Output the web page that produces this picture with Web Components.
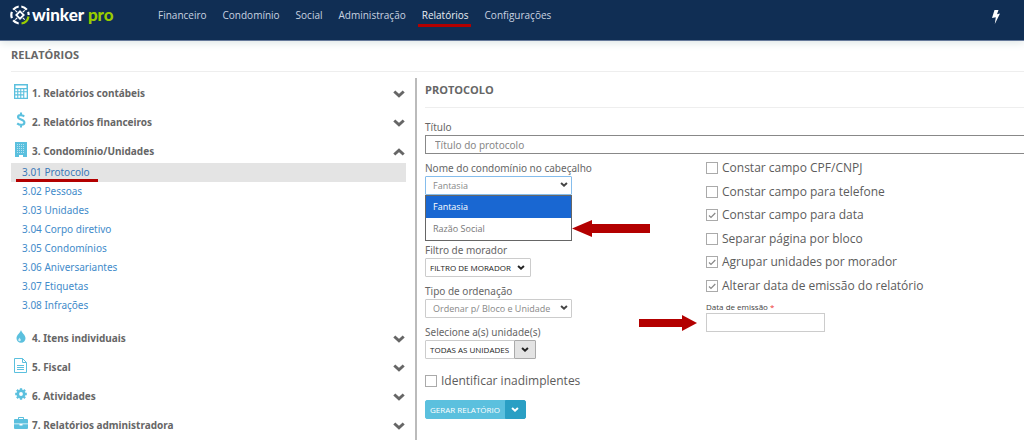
<!DOCTYPE html>
<html lang="pt-BR">
<head>
<meta charset="utf-8">
<meta name="viewport" content="width=device-width, initial-scale=1">
<title>Winker Pro – Relatórios</title>
<style>
  body { margin: 0; background: #fff; color: #666; font: 10px/16px "Noto Sans", "Open Sans", sans-serif; }
</style>
</head>
<body>
<winker-app></winker-app>

<script>
const define = (name, html, setup) => {
  const template = document.createElement('template');
  template.innerHTML = html;
  customElements.define(name, class extends HTMLElement {
    connectedCallback() {
      if (this.shadowRoot) return;
      const root = this.attachShadow({ mode: 'open' });
      root.append(template.content.cloneNode(true));
      if (setup) setup(this, root);
    }
  });
};

const icons = {
  calc: '<svg viewBox="0 0 14 15" width="14" height="15"><path fill="currentColor" fill-rule="evenodd" d="M0 0h14v15H0zM1.500 1.500v2.500h11V1.500zM1.300 5.300v1.900H3.200V5.300zm3 0v1.900h1.900V5.300zm3 0v1.900h1.900V5.300zm3 0v1.900h2.400V5.300zM1.300 8.300v1.900h1.900V8.300zm3 0v1.900h1.900V8.300zm3 0v1.900h1.900V8.300zm3 0v5.400h2.400V8.300zM1.300 11.500v2.200h1.900v-2.200zm3 0v2.200h1.900v-2.200zm3 0v2.200h1.900v-2.200z"/></svg>',
  dollar: '<svg viewBox="0 0 10 16" width="10" height="16"><path fill="none" stroke="currentColor" stroke-width="2.100" d="M8.200 4.400C6.500 2.700 2 2.500 2 5c0 3 6.400 2.200 6.400 5.500 0 3-5 2.900-7.200.9M5 .5v3M5 12v3.500"/></svg>',
  building: '<svg viewBox="0 0 12 15" width="12" height="15"><path fill="currentColor" d="M0 0h12v15H8v-2H4v2H0z"/><path stroke="#b5e1f1" stroke-width="1" stroke-dasharray="1 1" d="M2 2.500h8M2 4.500h8M2 6.500h8M2 8.500h8M2 10.500h8"/></svg>',
  drop: '<svg viewBox="0 0 10 13" width="10" height="13"><path fill="currentColor" d="M5 0c.6 2.800 4.500 4.800 4.500 8.300a4.500 4.500 0 0 1-9 0C.5 4.800 4.400 2.800 5 0z"/><path fill="#d6eff8" d="M3.500 7.400c.2 1 1.300 1.500 1.300 2.500a1.200 1.200 0 0 1-2.500 0c0-1 1-1.500 1.200-2.500z"/></svg>',
  file: '<svg viewBox="0 0 13 15" width="13" height="15"><path fill="none" stroke="currentColor" d="M.5.5h8l4 4v10H.5zM8.500.5v4h4M3 7.500h7M3 9.500h7M3 11.500h7"/></svg>',
  gear: '<svg viewBox="0 0 12 12" width="12" height="12"><circle cx="6" cy="6" r="3.200" fill="none" stroke="currentColor" stroke-width="2.600"/><path stroke="currentColor" stroke-width="2.300" d="M6 .2v1.900M6 9.900v1.900M.2 6h1.900M9.900 6h1.900M1.900 1.900l1.300 1.300M8.800 8.800l1.300 1.300M1.900 10.100l1.300-1.300M8.800 3.200l1.300-1.300"/></svg>',
  case: '<svg viewBox="0 0 14 12" width="14" height="12"><path fill="currentColor" fill-rule="evenodd" d="M4 2V.8Q4 0 4.800 0h4.400Q10 0 10 .8V2h3q1 0 1 1v3.500H0V3q0-1 1-1zm1 0h4V1H5zM0 7.300h5.500v1.200h3V7.300H14V11q0 1-1 1H1q-1 0-1-1z"/></svg>',
  down: '<svg viewBox="0 0 12 8" width="12" height="8"><path fill="none" stroke="currentColor" stroke-width="3" d="M1.300 1.500 6 5.800l4.700-4.300"/></svg>',
  up: '<svg viewBox="0 0 12 8" width="12" height="8"><path fill="none" stroke="currentColor" stroke-width="3" d="M1.300 6.500 6 2.200l4.700 4.300"/></svg>',
  caret: '<svg viewBox="0 0 12 8" width="8" height="5"><path fill="none" stroke="currentColor" stroke-width="3.200" d="M1.300 1.500 6 5.800l4.700-4.300"/></svg>',
  bolt: '<svg viewBox="0 0 8 14" width="8" height="14"><path fill="currentColor" d="M2.500 0h4L5 4.200l3-.7L2.800 14l1-6.800L0 8z"/></svg>',
  left: '<svg viewBox="0 0 78 17" width="78" height="17"><path fill="#b30000" d="M0 8.500 20 0v4h58v9H20v4z"/></svg>',
  right: '<svg viewBox="0 0 58 16" width="58" height="16"><path fill="#b30000" d="M58 8 43 0v4H0v8h43v4z"/></svg>',
  logo: '<svg viewBox="0 0 20 20" width="20" height="20"><g fill="none" stroke="#fff" stroke-width="2.200"><path d="M8.700 1.500A8.600 8.600 0 0 0 3.200 4.700M1.900 6.900a8.600 8.600 0 0 0 0 6.200M3.200 15.300a8.600 8.600 0 0 0 5.500 3.200M11.300 1.500A8.600 8.600 0 0 1 16.800 4.700M18.100 6.900q.6 1.500.5 3.100"/><path stroke="#9c0" d="M18.500 11.500a8.600 8.600 0 0 1-7 7"/><path stroke-width="1.800" d="M10 6.300 13.700 10 10 13.700 6.300 10z"/><path stroke-width="1.100" d="m5.300 5.300 1.900 1.900M14.700 5.300l-1.900 1.900M5.300 14.700l1.900-1.900M14.700 14.700l-1.900-1.900"/></g></svg>'
};

define('ui-icon', `<style>:host{display:inline-flex;flex:none}svg{display:block}</style>`,
  (host, root) => root.append(document.createRange().createContextualFragment(icons[host.getAttribute('name')])));

define('app-header', `
<style>
  :host { display: block; background: #102e54; border-bottom: 1px solid #66799a; height: 40px; position: relative; box-shadow: 0 2px 8px #dfe6e6; }
  .bar { display: flex; align-items: center; height: 30px; padding: 0 24px 0 10px; }
  .brand { display: flex; align-items: center; gap: 2px; width: 148px; color: #fff; text-decoration: none; font: 900 17px/24px Lato, sans-serif; }
  .brand b { color: #9c0; font-weight: 900; }
  nav { display: flex; gap: 16px; flex: 1; font-family: "Open Sans", sans-serif; }
  nav a { color: #c9d3e0; text-decoration: none; position: relative; }
  nav a[aria-current] { color: #e8edf3; }
  nav a[aria-current]::after { content: ""; position: absolute; left: -4px; right: -2px; top: 17px; height: 3px; background: #b30000; }
  button { border: 0; padding: 0; background: none; color: #fff; display: flex; margin-top: 4px; }
</style>
<div class="bar">
  <a class="brand" href="#inicio"><ui-icon name="logo"></ui-icon><span>winker <b>pro</b></span></a>
  <nav>
    <a href="#financeiro">Financeiro</a><a href="#condominio">Condomínio</a><a href="#social">Social</a>
    <a href="#administracao">Administração</a><a href="#relatorios" aria-current="page">Relatórios</a><a href="#configuracoes">Configurações</a>
  </nav>
  <button type="button" aria-label="Ações rápidas"><ui-icon name="bolt"></ui-icon></button>
</div>`);

define('section-title', `
<style>
  :host { display: block; border-bottom: 1px solid #eee; }
  h2 { margin: 0; color: #666; font: 700 11px/16px "Open Sans", sans-serif; }
</style>
<h2><slot></slot></h2>`);

define('report-group', `
<style>
  :host { display: block; margin-bottom: 5px; }
  button { display: flex; align-items: center; width: 100%; height: 24px; padding: 0 1px 0 0; border: 0; background: none; color: #666; font: 700 10px/16px "Noto Sans", sans-serif; text-align: left; }
  .icon { display: flex; justify-content: center; width: 19px; margin: 0 2px 4px 0; color: #5bc0de; }
  .name { flex: 1; }
  .chev { color: #666; margin-top: 2px; }
</style>
<button type="button"><span class="icon"></span><span class="name"></span></button>
<slot></slot>`,
  (host, root) => {
    const open = host.hasAttribute('open');
    root.querySelector('button').setAttribute('aria-expanded', open);
    root.querySelector('.name').textContent = host.getAttribute('label');
    root.querySelector('.icon').innerHTML = `<ui-icon name="${host.getAttribute('icon')}"></ui-icon>`;
    root.querySelector('button').insertAdjacentHTML('beforeend', `<ui-icon class="chev" name="${open ? 'up' : 'down'}"></ui-icon>`);
  });

define('report-link', `
<style>
  :host { display: block; padding: 0 11px; line-height: 19px; }
  :host(:last-of-type) { margin-bottom: 11px; }
  :host([current]) { background: #e4e4e4; }
  a { display: inline-block; color: #428bca; text-decoration: none; position: relative; }
  :host([current]) a { color: #3a78b8; }
  :host([current]) a::after { content: ""; position: absolute; left: -6px; right: -8px; bottom: 0; height: 3px; background: #b30000; }
</style>
<a href="#relatorio"><slot></slot></a>`);

define('report-menu', `
<style>:host { display: block; padding-top: 3px; }</style>
<report-group icon="calc" label="1. Relatórios contábeis"></report-group>
<report-group icon="dollar" label="2. Relatórios financeiros"></report-group>
<report-group icon="building" label="3. Condomínio/Unidades" open>
  <report-link current>3.01 Protocolo</report-link>
  <report-link>3.02 Pessoas</report-link>
  <report-link>3.03 Unidades</report-link>
  <report-link>3.04 Corpo diretivo</report-link>
  <report-link>3.05 Condomínios</report-link>
  <report-link>3.06 Aniversariantes</report-link>
  <report-link>3.07 Etiquetas</report-link>
  <report-link>3.08 Infrações</report-link>
</report-group>
<report-group icon="drop" label="4. Itens individuais"></report-group>
<report-group icon="file" label="5. Fiscal"></report-group>
<report-group icon="gear" label="6. Atividades"></report-group>
<report-group icon="case" label="7. Relatórios administradora"></report-group>`);

define('check-field', `
<style>
  :host { display: block; }
  label { display: flex; align-items: center; gap: 4px; font: 12px/16px "Open Sans", sans-serif; color: #5c5c5c; }
  input { appearance: none; box-sizing: border-box; width: 12px; height: 12px; margin: 0; border: 1px solid #aaa; background: #fff; flex: none; }
  input:checked { background: #fff url("data:image/svg+xml,%3Csvg xmlns='http://www.w3.org/2000/svg' viewBox='0 0 10 10'%3E%3Cpath d='M2 5.500 4 7.500 8.300 3' fill='none' stroke='%23888' stroke-width='1.200'/%3E%3C/svg%3E") center / 10px; }
</style>
<label><input type="checkbox"><slot></slot></label>`,
  (host, root) => { root.querySelector('input').checked = host.hasAttribute('checked'); });

define('select-field', `
<style>
  :host { display: block; margin-bottom: 6px; }
  :host([open]) { margin-bottom: 47px; }
  label { display: block; color: #666; }
  .box { position: relative; width: 147px; color: #444; font-family: "Open Sans", sans-serif; }
  select { appearance: none; display: block; box-sizing: border-box; width: 100%; height: 19px; margin: 0; padding: 0 20px 0 7px; border: 1px solid #ccc; border-radius: 1px; background: #fff; color: #888; font: 9px/16px "Open Sans", sans-serif; }
  :host([open]) select { border-color: #85bdec; }
  .box > ui-icon { position: absolute; right: 4px; top: 6px; pointer-events: none; }
  ul { display: none; position: absolute; z-index: 1; top: 100%; left: 0; right: 0; margin: 0; padding: 0; border: 1px solid #666; background: #fff; color: #777; list-style: none; font-size: 9px; line-height: 22px; }
  :host([open]) ul { display: block; }
  li { padding: 0 7px; }
  li[aria-selected=true] { background: #1967d2; color: #fff; }
  .box > .pointer { display: none; right: auto; left: 100%; top: 44px; }
  :host([open]) .pointer { display: flex; }
</style>
<label for="control"></label>
<div class="box">
  <select id="control"></select>
  <ui-icon name="caret"></ui-icon>
  <ul role="listbox"></ul>
  <ui-icon class="pointer" name="left"></ui-icon>
</div>`,
  (host, root) => {
    root.querySelector('label').textContent = host.getAttribute('label');
    if (host.hasAttribute('open')) root.querySelector('.pointer').style.display = 'flex';
    host.getAttribute('options').split('|').forEach((text, i) => {
      root.querySelector('select').add(new Option(text));
      if (!host.hasAttribute('open')) return;
      const item = document.createElement('li');
      item.setAttribute('role', 'option');
      item.setAttribute('aria-selected', i === 0);
      item.textContent = text;
      root.querySelector('ul').append(item);
    });
  });

define('text-field', `
<style>
  :host { display: block; }
  label { display: block; color: #666; }
  i { color: #e33; font-style: normal; }
  .box { position: relative; }
  input { display: block; box-sizing: border-box; width: 100%; height: 19px; margin: 0; padding: 0 9px; border: 1px solid #888; border-right: 0; background: #fff; color: #555; font: 10px/16px "Noto Sans", sans-serif; }
  input::placeholder { color: #888; opacity: 1; }
  .pointer { display: none; position: absolute; right: 100%; top: 2px; margin-right: 9px; }
  :host([compact]) label { font: 8px/12px "Open Sans", sans-serif; color: #444; }
  :host([compact]) .box { width: 119px; }
  :host([compact]) input { border: 1px solid #ccc; }
  :host([compact]) .pointer { display: flex; }
</style>
<label for="control"><slot></slot></label>
<div class="box"><input id="control" type="text"><ui-icon class="pointer" name="right"></ui-icon></div>`,
  (host, root) => {
    root.querySelector('input').placeholder = host.getAttribute('placeholder') || '';
    if (host.hasAttribute('required')) root.querySelector('label').insertAdjacentHTML('beforeend', ' <i>*</i>');
  });

define('menu-button', `
<style>
  :host { display: flex; height: 19px; }
  button { display: flex; align-items: center; gap: 6px; box-sizing: border-box; height: 19px; margin: 0; padding: 0 5px 0 4px; border: 1px solid #ccc; border-radius: 1px; background: #fff; color: #222; font: 8px/16px "Open Sans", sans-serif; white-space: nowrap; }
  .toggle { width: 22px; justify-content: center; background: #e3e3e3; border-color: #aaa; margin-left: -1px; padding: 0; }
  :host([primary]) button { background: #5bc0de; border-color: #5bc0de; color: #fff; border-radius: 2px 0 0 2px; }
  :host([primary]) .toggle { width: 21px; background: #2a9fc4; border-color: #2a9fc4; border-radius: 0 2px 2px 0; }
</style>
<button class="main" type="button"><slot></slot></button>`,
  (host, root) => {
    if (host.hasAttribute('split'))
      root.querySelector('.main').insertAdjacentHTML('afterend', '<button class="toggle" type="button" aria-label="Mais opções"><ui-icon name="caret"></ui-icon></button>');
    else root.querySelector('.main').insertAdjacentHTML('beforeend', '<ui-icon name="caret"></ui-icon>');
  });

define('report-form', `
<style>
  :host { display: block; border-left: 2px solid #bbb; padding-left: 8px; }
  section-title { padding: 4px 0 9px; }
  form { margin: 0; }
  .title { padding-top: 11px; }
  .columns { display: grid; grid-template-columns: minmax(0, 281fr) minmax(0, 318fr); padding-top: 6px; }
  .caption { height: 16px; }
  .action { margin-bottom: 6px; }
  .overdue { margin: 14px 0 11px; }
  .checks { display: grid; height: 134px; align-content: space-between; padding-bottom: 7px; }
</style>
<section-title>PROTOCOLO</section-title>
<form>
  <text-field class="title" placeholder="Título do protocolo">Título</text-field>
  <div class="columns">
    <div>
      <select-field open label="Nome do condomínio no cabeçalho" options="Fantasia|Razão Social"></select-field>
      <div class="caption">Filtro de morador</div>
      <menu-button class="action">FILTRO DE MORADOR</menu-button>
      <select-field label="Tipo de ordenação" options="Ordenar p/ Bloco e Unidade"></select-field>
      <div class="caption">Selecione a(s) unidade(s)</div>
      <menu-button split>TODAS AS UNIDADES</menu-button>
      <check-field class="overdue">Identificar inadimplentes</check-field>
      <menu-button split primary>GERAR RELATÓRIO</menu-button>
    </div>
    <div>
      <div class="checks">
        <check-field>Constar campo CPF/CNPJ</check-field>
        <check-field>Constar campo para telefone</check-field>
        <check-field checked>Constar campo para data</check-field>
        <check-field>Separar página por bloco</check-field>
        <check-field checked>Agrupar unidades por morador</check-field>
        <check-field checked>Alterar data de emissão do relatório</check-field>
      </div>
      <text-field compact required>Data de emissão</text-field>
    </div>
  </div>
</form>`);

define('winker-app', `
<style>
  :host { display: flex; flex-direction: column; min-height: 100vh; }
  main { flex: 1; display: flex; flex-direction: column; padding-left: 11px; }
  .heading { padding: 6px 0 8px; }
  .layout { flex: 1; display: grid; grid-template-columns: minmax(0, 395fr) minmax(0, 609fr); gap: 9px; padding-top: 6px; }
</style>
<app-header></app-header>
<main>
  <section-title class="heading">RELATÓRIOS</section-title>
  <div class="layout"><report-menu></report-menu><report-form></report-form></div>
</main>`);
</script>
</body>
</html>
